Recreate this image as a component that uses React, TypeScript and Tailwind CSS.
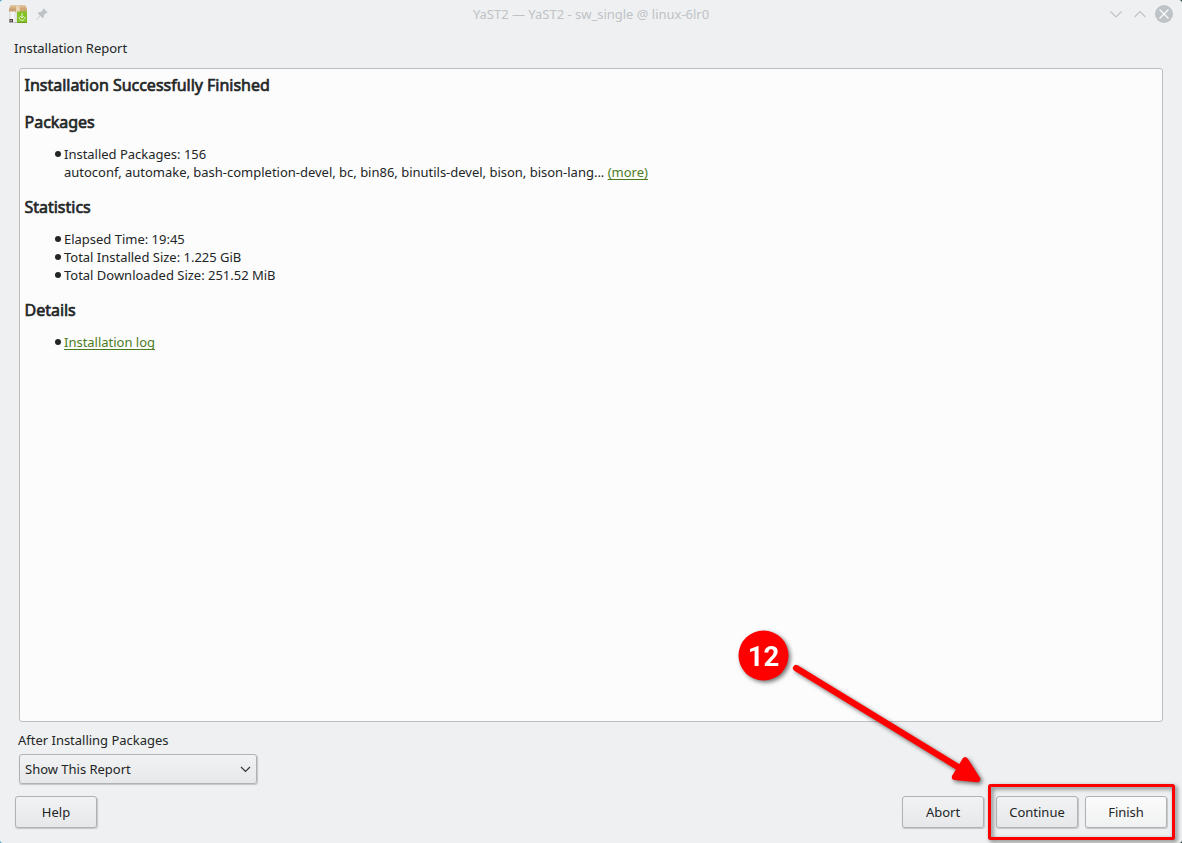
import type { ReactNode } from "react";

function Heading({ children, className = "" }: { children: ReactNode; className?: string }) {
  return (
    <h2
      className={`h-[22px] pl-[0.5px] text-[16px] leading-[22px] tracking-[-0.015px] whitespace-nowrap [-webkit-text-stroke:0.65px_#232627] ${className}`}
    >
      {children}
    </h2>
  );
}

function Item({ children }: { children: ReactNode }) {
  return (
    <li className="flex">
      <span className="mt-[6px] mr-[3px] size-[6px] shrink-0 rounded-full bg-[#232627]" />
      <div className="whitespace-nowrap">{children}</div>
    </li>
  );
}

function Link({ children }: { children: ReactNode }) {
  return (
    <a className="text-[#4d7c1e] underline decoration-1 underline-offset-2 [text-decoration-skip-ink:none]">
      {children}
    </a>
  );
}

function PushButton({ children, light = false }: { children: ReactNode; light?: boolean }) {
  return (
    <button
      className={`h-8 w-[82px] rounded-[3px] border border-[#b0b2b4] bg-linear-to-b text-center leading-[18px] shadow-[0.5px_1px_1px_rgba(0,0,0,0.18)] ${
        light ? "from-[#fcfcfc] to-[#f0f1f1]" : "from-[#f1f2f3] to-[#e7e8ea]"
      }`}
    >
      {children}
    </button>
  );
}

function PackageIcon() {
  return (
    <svg width="20" height="20" viewBox="0 0 20 20" className="shrink-0">
      <defs>
        <linearGradient id="side" x1="0" y1="0" x2="1" y2="0">
          <stop offset="0" stopColor="#d9d9d9" />
          <stop offset="0.4" stopColor="#f8f8f8" />
          <stop offset="1" stopColor="#dedede" />
        </linearGradient>
      </defs>
      <path d="M1 5 2.500 1.500h15L19 5v3.500H1z" fill="#cfa878" />
      <path d="M2.200 3.500 3 1.500h14l.8 2z" fill="#dcbd92" />
      <path d="M1 7h8v12H1z" fill="url(#side)" />
      <path d="M1 5h8v2L7.500 8 6 7 4.500 8 3 7 1 8z" fill="#c9a172" />
      <path d="M9 7.500 10.500 6.500 12 8l1.500-1.500L15 8l1.500-1.500L19 8v11H9z" fill="#84c126" />
      <path d="M8 1.500h3.500L12 6.500 10 8 8 7z" fill="#ead3b0" />
      <path d="M1.500 15H5v3.300H1.500z" fill="#51413c" />
      <path d="M2.500 16h1.300v1.300H2.500z" fill="#d8d8d8" />
      <path d="M1 18.500h8v.5H1z" fill="#9a9a9a" />
      <path d="M9 18h10v1H9z" fill="#69a01e" />
      <path
        d="M14 9v5m-2-2 2 2 2-2m-5 1c0 4.500 6 4.500 6 0"
        fill="none"
        stroke="#dff0c4"
        strokeWidth="1"
      />
    </svg>
  );
}

function PinIcon() {
  return (
    <svg width="12" height="12" viewBox="0 0 12 12" className="shrink-0">
      <path
        d="M7.600.3 11.700 4.400 10.700 5.200 10 5.100 7.900 7.300 7.600 9.600 6.700 10.300 4.400 8 1 11.400.3 11.700.5 11 3.900 7.500 1.600 5.200 2.400 4.300 4.700 4.100 7 2 6.900 1.200z"
        fill="#bdc3c7"
      />
    </svg>
  );
}

function Annotation() {
  return (
    <svg
      width="1182"
      height="843"
      viewBox="0 0 1182 843"
      className="pointer-events-none absolute top-0 left-0 [filter:drop-shadow(2px_2px_2px_rgba(0,0,0,0.55))]"
    >
      <circle cx="763.5" cy="655.5" r="25" fill="#fe0000" />
      <text
        x="763.5"
        y="666"
        textAnchor="middle"
        fill="#fff"
        fontFamily="Roboto, sans-serif"
        fontWeight="700"
        fontSize="27.5"
      >
        12
      </text>
      <path d="M796 668 962 769.5" stroke="#fe0000" strokeWidth="6.2" strokeLinecap="round" />
      <path
        d="M965.2 760.2 977.3 779.2 954.8 777z"
        fill="#fe0000"
        stroke="#fe0000"
        strokeWidth="6"
        strokeLinejoin="round"
      />
      <rect x="989.5" y="785.5" width="184" height="53" rx="1" fill="none" stroke="#fe0000" strokeWidth="3" />
    </svg>
  );
}

export default function App() {
  return (
    <div className="h-[843px] w-[1182px] overflow-hidden bg-linear-to-r from-[#3e9ac4] to-[#173235]">
      <div className="relative flex h-full w-full flex-col overflow-hidden rounded-[3px] bg-[#eff0f1] font-['Noto_Sans',sans-serif] text-[13px] leading-[18px] tracking-[-0.012px] text-[#232627]">
        <header className="grid h-7 shrink-0 grid-cols-[1fr_auto_1fr] items-center pr-[9px] pl-2 text-[#bdc3c7]">
          <div className="flex items-center gap-2">
            <PackageIcon />
            <PinIcon />
          </div>
          <div className="pl-px">YaST2 — YaST2 - sw_single @ linux-6lr0</div>
          <div className="flex items-center justify-end">
            <svg width="64" height="18" viewBox="0 0 64 18" fill="none" stroke="#bdc3c7" strokeWidth="1.2">
              <path d="m1.5 6.5 5.5 5.5 5.5-5.5M25.5 12 31 6.5 36.5 12" />
              <circle cx="55" cy="9" r="9" fill="#bdc3c7" stroke="none" />
              <path d="m50.5 4.5 9 9m0-9-9 9" stroke="#fcfcfc" />
            </svg>
          </div>
        </header>

        <div className="mt-[11px] ml-[14px]">Installation Report</div>

        <main className="mt-[11px] mr-[19px] ml-[19px] h-[654px] shrink-0 rounded-[3px] border border-[#bbbdbf] bg-[#fcfcfc] pt-[5px] pl-1">
          <Heading>Installation Successfully Finished</Heading>
          <Heading className="mt-[15px]">Packages</Heading>
          <ul className="mt-3 ml-[31px]">
            <Item>
              Installed Packages: 156
              <br />
              autoconf, automake, bash-completion-devel, bc, bin86, binutils-devel, bison, bison-lang... <Link>(more)</Link>
            </Item>
          </ul>
          <Heading className="mt-[15px]">Statistics</Heading>
          <ul className="mt-3 ml-[31px]">
            <Item>Elapsed Time: 19:45</Item>
            <Item>Total Installed Size: 1.225 GiB</Item>
            <Item>Total Downloaded Size: 251.52 MiB</Item>
          </ul>
          <Heading className="mt-[15px]">Details</Heading>
          <ul className="mt-3 ml-[31px]">
            <Item>
              <Link>Installation log</Link>
            </Item>
          </ul>
        </main>

        <label className="mt-[9px] ml-[18px]">After Installing Packages</label>
        <button className="mt-[5px] ml-[19px] flex h-[30px] w-[238px] shrink-0 items-center justify-between rounded-[3px] border border-[#b0b2b4] bg-linear-to-b from-[#f1f2f3] to-[#e7e8ea] px-[5px] shadow-[0.5px_1px_1px_rgba(0,0,0,0.18)]">
          Show This Report
          <svg width="11" height="7" viewBox="0 0 11 7" fill="none" stroke="#31363b" strokeWidth="1.2">
            <path d="m1 1 4.5 4.5L10 1" />
          </svg>
        </button>

        <footer className="mt-3 flex pr-[15px] pl-[15px]">
          <PushButton>Help</PushButton>
          <div className="ml-auto flex">
            <PushButton>Abort</PushButton>
            <div className="ml-3 flex gap-[7px]">
              <PushButton>Continue</PushButton>
              <PushButton light>Finish</PushButton>
            </div>
          </div>
        </footer>

        <Annotation />
      </div>
    </div>
  );
}
